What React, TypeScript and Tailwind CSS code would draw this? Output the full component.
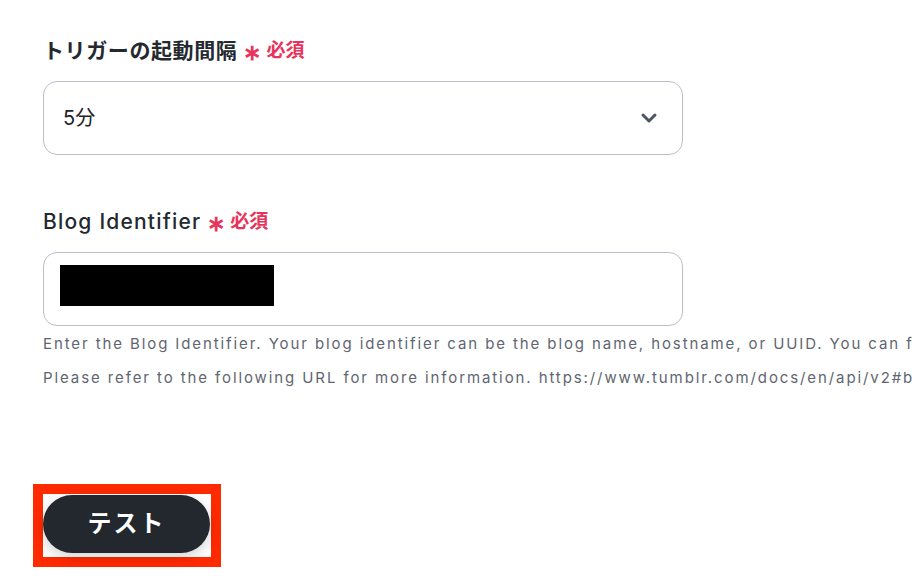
import React from "react";

const font = { fontFamily: 'Inter, "Noto Sans CJK JP", sans-serif' };

function Required() {
  return (
    <span className="ml-[6px] inline-flex items-center text-[#e8335c] tracking-normal">
      <span className="text-[22px] font-bold leading-none relative top-[1px]">∗</span>
      <span className="ml-[5px] text-[19px] font-semibold">必須</span>
    </span>
  );
}

export default function App() {
  return (
    <div className="w-[912px] h-[576px] bg-white overflow-hidden" style={font}>
      <div className="pl-[43px] pt-[36px]">
        <div className="flex items-center h-[30px] text-[21px] font-semibold text-[#24292f] tracking-[0.6px]">
          トリガーの起動間隔
          <Required />
        </div>
        <div className="mt-[15px] w-[640px] h-[74px] rounded-[14px] border border-[#b9c0c8] flex items-center justify-between pl-[19px] pr-[24px]">
          <span className="text-[20px] text-[#1f2328]">5分</span>
          <svg width="18" height="12" viewBox="0 0 18 12" fill="none">
            <path d="M3 3l6 6 6-6" stroke="#4b5563" strokeWidth="3" strokeLinecap="round" strokeLinejoin="round" />
          </svg>
        </div>

        <div className="mt-[52px] flex items-center h-[30px] text-[21px] font-medium text-[#24292f] tracking-[1.2px]">
          Blog Identifier
          <Required />
        </div>
        <div className="mt-[15px] w-[640px] h-[74px] rounded-[14px] border border-[#b9c0c8] flex items-start pt-[12px] pl-[16px]">
          <div className="w-[214px] h-[41px] bg-black" />
        </div>
        <div className="mt-[1px] text-[15px] leading-[34px] text-[#5f6670] tracking-[1.9px] whitespace-nowrap">
          <p>Enter the Blog Identifier. Your blog identifier can be the blog name, hostname, or UUID. You can find it in the blog settings.</p>
          <p>Please refer to the following URL for more information. https://www.tumblr.com/docs/en/api/v2#blog-identifiers</p>
        </div>
      </div>
      <div className="ml-[33px] mt-[89px] w-[188px] h-[83px] border-[10px] border-[#ff2a00] pt-[1px]">
        <button className="w-[167px] h-[58px] rounded-full bg-[#23272e] text-white text-[24px] font-bold tracking-[2px] shadow-[0_4px_14px_rgba(0,0,0,0.18)]">
          テスト
        </button>
      </div>
    </div>
  );
}
